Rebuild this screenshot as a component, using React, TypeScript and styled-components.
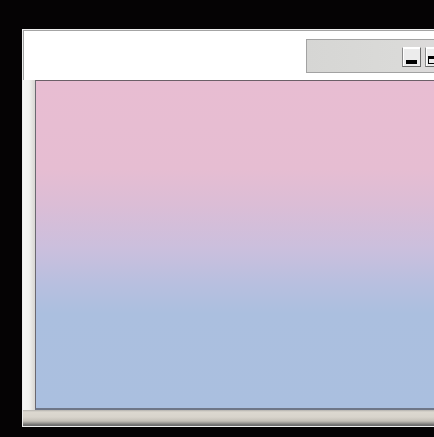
import { createGlobalStyle } from 'styled-components'
import styled from 'styled-components'

const GlobalStyle = createGlobalStyle`
  html, body {
    margin: 0;
    padding: 0;
    background: #050304;
    overflow: hidden;
    font-family: "Liberation Sans", Arial, sans-serif;
  }
  #root {
    height: 437px;
    overflow: hidden;
  }
`

const Desktop = styled.div`
  height: 437px;
  padding: 29px 0 0 22px;
  box-sizing: border-box;
`

const Window = styled.div`
  width: 470px;
  height: 398px;
  box-sizing: border-box;
  border: 1px solid #eeeeee;
  box-shadow: inset 1px 1px 0 #a4a4a4;
  background: #ffffff;
  display: flex;
  flex-direction: column;
`

const Header = styled.div`
  height: 50px;
  flex-shrink: 0;
  display: flex;
  align-items: flex-start;
  padding: 9px 0 0 283px;
  box-sizing: border-box;
`

const TitleBar = styled.div`
  flex: 1;
  height: 34px;
  box-sizing: border-box;
  border: 1px solid #a2a2a2;
  border-right: none;
  background: linear-gradient(to right, #d6d6d4 0%, #dadad8 50%, #e0dade 100%);
  display: flex;
  align-items: flex-start;
  gap: 4px;
  padding: 7px 0 0 95px;
`

const CaptionButton = styled.div`
  width: 19px;
  height: 20px;
  box-sizing: border-box;
  flex-shrink: 0;
  background: #ececec;
  border-top: 1px solid #ffffff;
  border-left: 1px solid #8a8a8a;
  border-right: 1px solid #6a6a6a;
  border-bottom: 1px solid #6a6a6a;
  box-shadow: inset 1px 1px 0 #ffffff;
  position: relative;
`

const MinGlyph = styled.span`
  position: absolute;
  left: 3px;
  bottom: 2px;
  width: 11px;
  height: 4px;
  background: #000;
`

const RestoreGlyph = styled.span`
  position: absolute;
  left: 2px;
  top: 8px;
  width: 10px;
  height: 8px;
  box-sizing: border-box;
  border: 1px solid #000;
  border-top-width: 3px;
`

const Body = styled.div`
  flex: 1;
  display: flex;
  min-height: 0;
`

const SideFrame = styled.div`
  width: 12px;
  flex-shrink: 0;
  background: linear-gradient(to right, #f6f6f6 0%, #f2f2f0 50%, #d8d6d2 100%);
`

const Canvas = styled.div`
  flex: 1;
  box-sizing: border-box;
  border-top: 1px solid #6c6068;
  border-left: 1px solid #6a6870;
  border-bottom: 2px solid #6e7688;
  background: linear-gradient(
    to bottom,
    #e8bdd2 0%,
    #e6bdd2 27%,
    #dbbdd6 38%,
    #cbbfdd 51%,
    #b8bfdf 62%,
    #abbfdf 71%,
    #aabfdf 100%
  );
`

const BottomFrame = styled.div`
  height: 16px;
  flex-shrink: 0;
  background: linear-gradient(
    to bottom,
    #b4b2ae 0px,
    #dcd8d0 2px,
    #d8d4cc 7px,
    #c4c0b8 11px,
    #9a9894 13px,
    #6c6c6c 15px
  );
`

export default function App() {
  return (
    <>
      <GlobalStyle />
      <Desktop>
        <Window>
          <Header>
            <TitleBar>
              <CaptionButton>
                <MinGlyph />
              </CaptionButton>
              <CaptionButton>
                <RestoreGlyph />
              </CaptionButton>
              <CaptionButton />
            </TitleBar>
          </Header>
          <Body>
            <SideFrame />
            <Canvas />
          </Body>
          <BottomFrame />
        </Window>
      </Desktop>
    </>
  )
}
